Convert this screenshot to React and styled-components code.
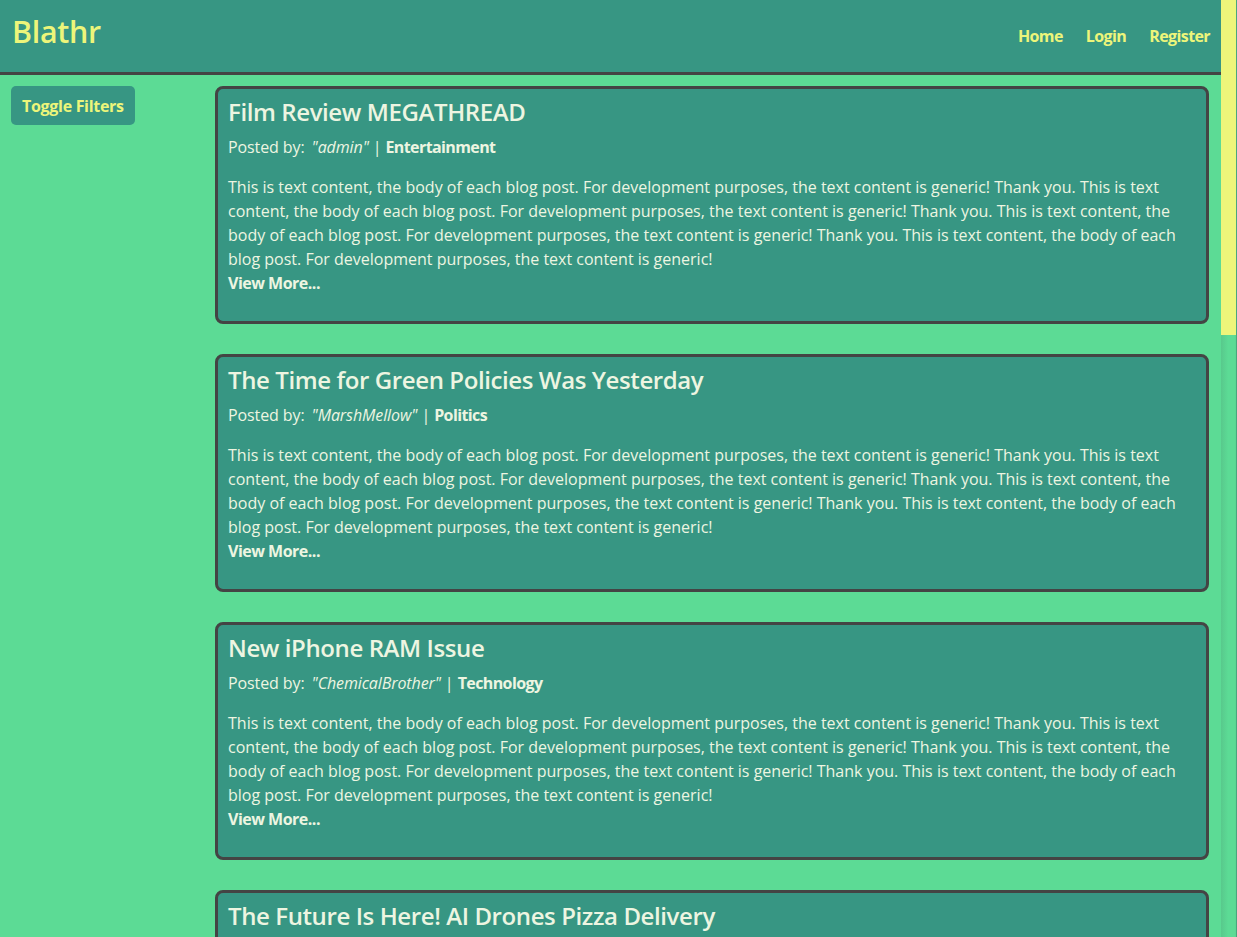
import React from "react";
import styled, { createGlobalStyle } from "styled-components";

const GlobalStyle = createGlobalStyle`
    html, body {
        margin: 0;
        padding: 0;
        height: 100%;
        overflow: hidden;
        background-color: #5cdb95;
        font-family: "Open Sans", "Noto Sans", sans-serif;
    }
`;

const Page = styled.div`
    display: flex;
    flex-direction: row;
    height: 100vh;
    overflow: hidden;
`;

const Viewport = styled.div`
    flex: 1;
    min-width: 0;
    overflow: hidden;
`;

// custom scrollbar look, drawn as a rail beside the page
const ScrollRail = styled.div`
    display: flex;
    flex-direction: column;
    width: 16px;
    flex-shrink: 0;
    background: linear-gradient(to right, #58c98c 0%, #5cdb95 45%, #5cdb95 90%, #3f8f72 100%);
`;

const ScrollThumb = styled.div`
    height: 335px;
    width: 15px;
    background-color: #edf57a;
`;

const Header = styled.header`
    display: flex;
    flex-direction: row;
    justify-content: space-between;
    align-items: center;
    height: 72px;
    padding: 0 11px 0 12px;
    background-color: #379683;
    border-bottom: 3px solid #444444;
`;

const Logo = styled.h1`
    margin: 0;
    margin-top: -9px;
    font-size: 1.9rem;
    font-weight: 600;
    color: #edf57a;
    letter-spacing: -0.3px;
`;

const Nav = styled.nav`
    display: flex;
    flex-direction: row;
    gap: 23px;
    a {
        color: #edf57a;
        font-weight: 700;
        font-size: 1rem;
        text-decoration: none;
        letter-spacing: -0.6px;
    }
`;

const Layout = styled.div`
    display: grid;
    grid-template-columns: 204px 1fr;
    padding: 11px 12px 0 11px;
`;

const Sidebar = styled.aside`
    display: flex;
    flex-direction: column;
    align-items: start;
`;

const ToggleButton = styled.button`
    height: 39px;
    padding: 0 11px;
    border: none;
    border-radius: 5px;
    background-color: #379683;
    color: #edf57a;
    font-family: inherit;
    font-size: 1rem;
    font-weight: 700;
    letter-spacing: -0.3px;
    cursor: pointer;
`;

const Feed = styled.main`
    display: flex;
    flex-direction: column;
    gap: 30px;
`;

const PostCard = styled.article`
    background-color: #379683;
    border: 3px solid #444444;
    border-radius: 8px;
    padding: 5px 10px 26px 10px;
    color: #edf5e1;
`;

const PostTitle = styled.h2`
    margin: 0;
    font-size: 1.5rem;
    font-weight: 600;
    line-height: 36px;
    letter-spacing: -0.4px;
`;

const PostMeta = styled.p`
    margin: 0;
    margin-top: 5px;
    font-size: 1rem;
    line-height: 24px;
    letter-spacing: -0.1px;
    em {
        margin-left: 3px;
    }
    strong {
        font-weight: 700;
        letter-spacing: -0.6px;
    }
`;

const PostBody = styled.p`
    margin: 16px 0 0 0;
    font-size: 1rem;
    line-height: 24px;
`;

const ViewMore = styled.a`
    display: block;
    font-weight: 700;
    font-size: 1rem;
    line-height: 24px;
    letter-spacing: -0.5px;
    color: #edf5e1;
    text-decoration: none;
`;

const BODY = "This is text content, the body of each blog post. For development purposes, the text content is generic! Thank you. This is text content, the body of each blog post. For development purposes, the text content is generic! Thank you. This is text content, the body of each blog post. For development purposes, the text content is generic! Thank you. This is text content, the body of each blog post. For development purposes, the text content is generic!";

const posts = [
    { id: 1, title: "Film Review MEGATHREAD", author: "admin", category: "Entertainment" },
    { id: 2, title: "The Time for Green Policies Was Yesterday", author: "MarshMellow", category: "Politics" },
    { id: 3, title: "New iPhone RAM Issue", author: "ChemicalBrother", category: "Technology" },
    { id: 4, title: "The Future Is Here! AI Drones Pizza Delivery", author: "admin", category: "Technology" },
    { id: 5, title: "Best Hiking Trails This Summer", author: "MarshMellow", category: "Lifestyle" },
    { id: 6, title: "Local Elections: What You Need to Know", author: "ChemicalBrother", category: "Politics" },
    { id: 7, title: "Album of the Year Predictions", author: "admin", category: "Entertainment" },
    { id: 8, title: "Is Quantum Computing Overhyped?", author: "MarshMellow", category: "Technology" },
    { id: 9, title: "Weekend Recipe Swap", author: "ChemicalBrother", category: "Lifestyle" },
];

function Post({ post }) {
    return (
        <PostCard>
            <PostTitle>{post.title}</PostTitle>
            <PostMeta>
                Posted by: <em>"{post.author}"</em> | <strong>{post.category}</strong>
            </PostMeta>
            <PostBody>{BODY}</PostBody>
            <ViewMore href="#">View More...</ViewMore>
        </PostCard>
    );
}

function App() {
    return (
        <>
            <GlobalStyle />
            <Page>
                <Viewport>
                    <Header>
                        <Logo>Blathr</Logo>
                        <Nav>
                            <a href="#">Home</a>
                            <a href="#">Login</a>
                            <a href="#">Register</a>
                        </Nav>
                    </Header>
                    <Layout>
                        <Sidebar>
                            <ToggleButton>Toggle Filters</ToggleButton>
                        </Sidebar>
                        <Feed>
                            {posts.map((p) => <Post key={p.id} post={p} />)}
                        </Feed>
                    </Layout>
                </Viewport>
                <ScrollRail>
                    <ScrollThumb />
                </ScrollRail>
            </Page>
        </>
    );
}

export default App;
